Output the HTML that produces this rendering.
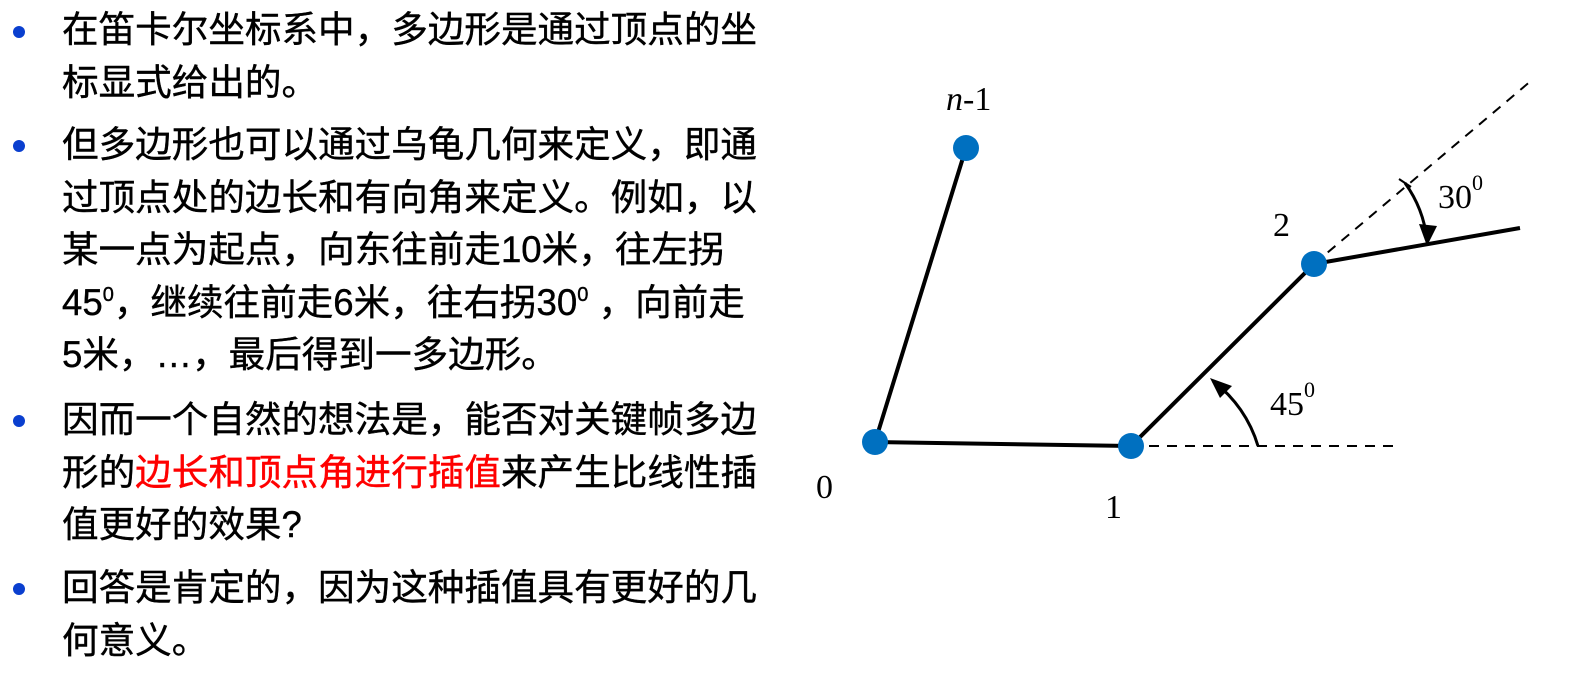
<!DOCTYPE html>
<html><head><meta charset="utf-8"><style>
body{margin:0;width:1594px;height:680px;background:#fff;overflow:hidden;position:relative;font-family:"Liberation Sans","Noto Sans CJK SC",sans-serif;}
.t{position:absolute;left:62px;width:780px;white-space:nowrap;font-size:36.6px;line-height:52.5px;color:#000;-webkit-text-stroke:0.4px #000;}
.b{position:absolute;left:13px;width:12px;height:12px;border-radius:50%;background:#0a3fcf;}
.r{color:#f00;-webkit-text-stroke:0.4px #f00}
sup{font-size:20px;vertical-align:14px;line-height:0}
</style></head><body>
<div class="b" style="top:26px"></div>
<div class="t" style="top:4px">在笛卡尔坐标系中，多边形是通过顶点的坐<br>标显式给出的。</div>
<div class="b" style="top:140px"></div>
<div class="t" style="top:119px">但多边形也可以通过乌龟几何来定义，即通<br>过顶点处的边长和有向角来定义。例如，以<br>某一点为起点，向东往前走10米，往左拐<br>45<sup>0</sup>，继续往前走6米，往右拐30<sup>0</sup> ，向前走<br>5米，…，最后得到一多边形。</div>
<div class="b" style="top:415px"></div>
<div class="t" style="top:394px">因而一个自然的想法是，能否对关键帧多边<br>形的<span class="r">边长和顶点角进行插值</span>来产生比线性插<br>值更好的效果?</div>
<div class="b" style="top:583px"></div>
<div class="t" style="top:562px">回答是肯定的，因为这种插值具有更好的几<br>何意义。</div>
<svg width="1594" height="680" style="position:absolute;left:0;top:0" font-family="Liberation Serif,serif" font-size="34">
<g stroke="#000" fill="none">
<path d="M966 148 L875 442 L1131 446 L1314 264 L1520 228" stroke-width="4"/>
<path d="M1131 446 L1395 446 M1314 264 L1532 80" stroke-width="2" stroke-dasharray="10,8"/>
<path d="M1258 446 A127 127 0 0 0 1213 381" stroke-width="3"/>
<path d="M1405 183 A120 120 0 0 1 1427 240" stroke-width="3"/>
<path d="M1399 179 L1411 187" stroke-width="2"/>
</g>
<path d="M1210 378 L1232 386 L1220 398 Z" fill="#000"/>
<path d="M1427 246 L1419 224 L1437 226 Z" fill="#000"/>
<g fill="#0070c0">
<circle cx="966" cy="148" r="13"/><circle cx="875" cy="442" r="13"/><circle cx="1131" cy="446" r="13"/><circle cx="1314" cy="264" r="13"/>
</g>
<text x="946" y="110"><tspan font-style="italic">n</tspan>-1</text>
<text x="816" y="498">0</text>
<text x="1105" y="518">1</text>
<text x="1273" y="236">2</text>
<text x="1270" y="415">45<tspan font-size="22" dy="-18">0</tspan></text>
<text x="1438" y="208">30<tspan font-size="22" dy="-18">0</tspan></text>
</svg>
</body></html>
